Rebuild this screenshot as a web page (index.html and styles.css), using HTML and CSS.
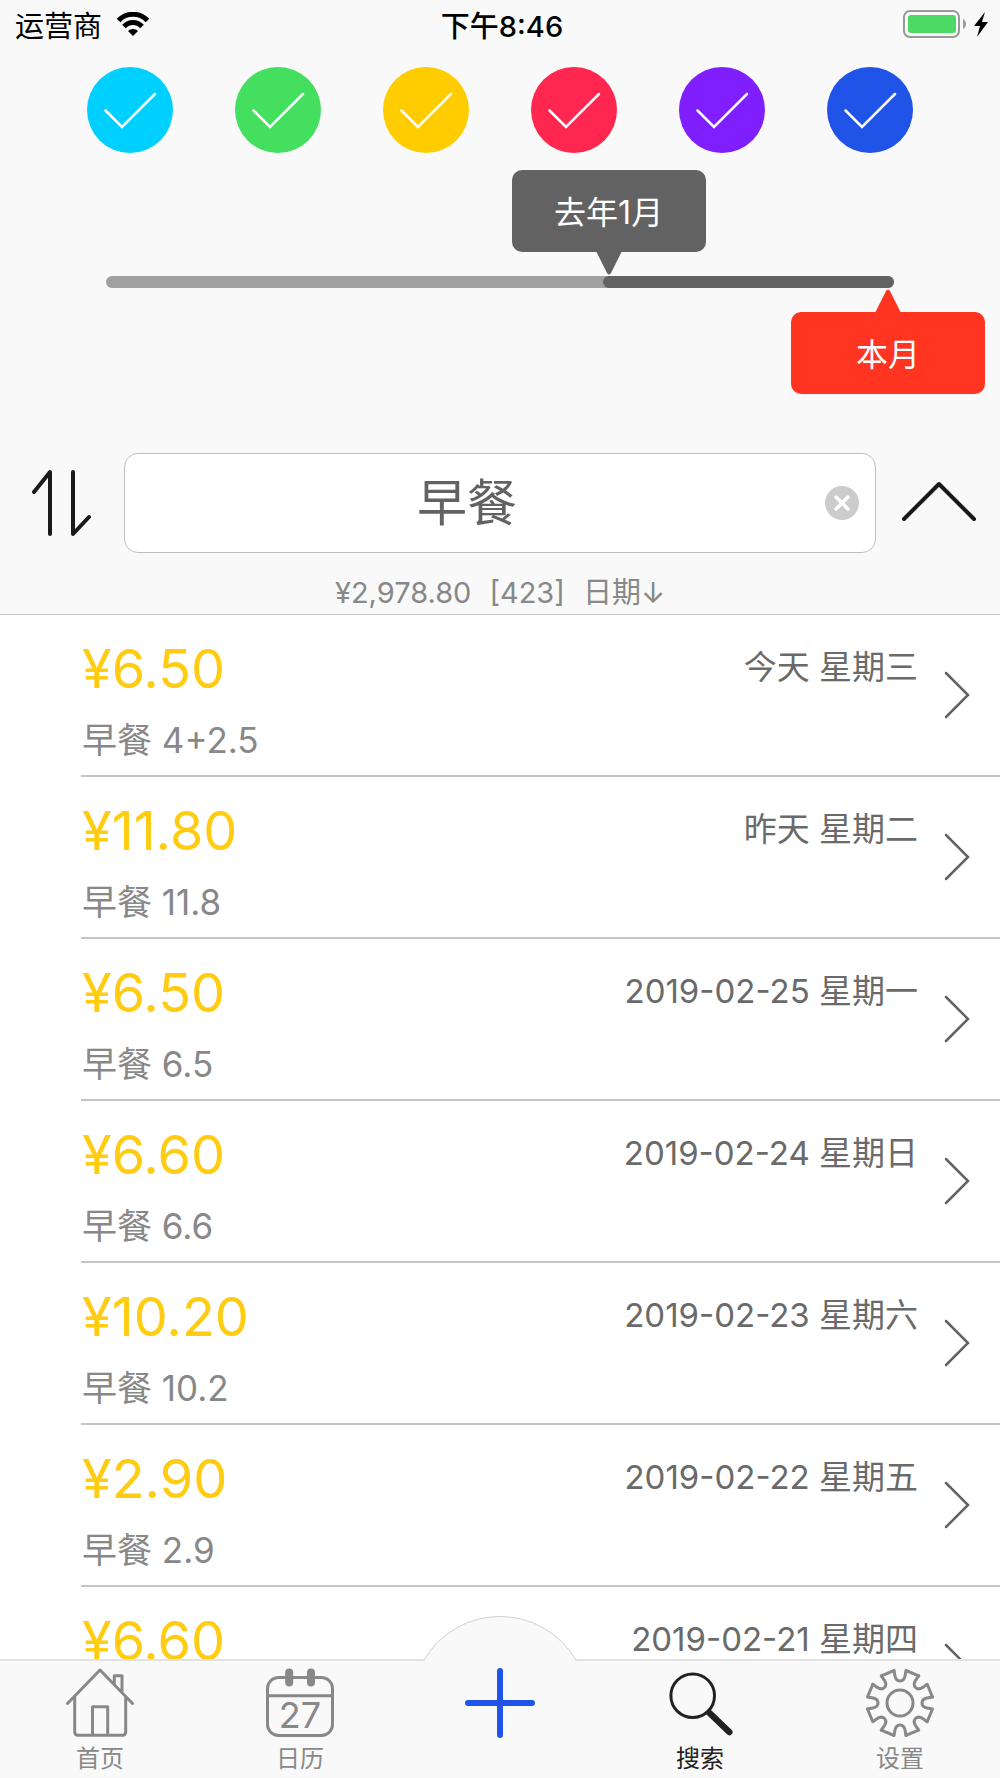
FILE: index.html
```html
<!DOCTYPE html>
<html lang="zh-CN">
<head>
<meta charset="utf-8">
<meta name="viewport" content="width=device-width, initial-scale=1">
<title>搜索</title>
<link rel="stylesheet" href="styles.css">
</head>
<body>
<svg class="defs" aria-hidden="true">
  <symbol id="check" viewBox="0 0 86 86"><path d="M18.500 43.500 35 60 68 27"/></symbol>
  <symbol id="next" viewBox="0 0 28 50"><path d="M3 3 25 25 3 47"/></symbol>
</svg>

<header class="header">
  <div class="status">
    <div class="status-left">
      <span>运营商</span>
      <svg class="wifi" viewBox="0 0 34 24" aria-hidden="true">
        <path d="M2.500 8.500C10.500.2 23.500.2 31.500 8.500M8 14.500c5-5.300 13-5.300 18 0" fill="none" stroke="#000" stroke-width="5"/>
        <path d="M17 24l-5-5c2.600-2.700 7.400-2.700 10 0z"/>
      </svg>
    </div>
    <time class="status-time">下午8:46</time>
    <div class="status-right">
      <svg class="battery" viewBox="0 0 86 28" aria-hidden="true">
        <rect x="1" y="1" width="55" height="26" rx="6" fill="none" stroke="#999" stroke-width="2"/>
        <rect x="5" y="5" width="48" height="18" rx="3" fill="#4cd964"/>
        <path d="M60 9c4 2 4 8 0 10z" fill="#999"/>
        <path d="M82 2 71 16h6l-3 11 11-15h-6z"/>
      </svg>
    </div>
  </div>

  <div class="colors">
    <label class="color"><input type="checkbox" class="dot cyan" aria-label="青色" checked><svg class="check"><use href="#check"/></svg></label>
    <label class="color"><input type="checkbox" class="dot green" aria-label="绿色" checked><svg class="check"><use href="#check"/></svg></label>
    <label class="color"><input type="checkbox" class="dot yellow" aria-label="黄色" checked><svg class="check"><use href="#check"/></svg></label>
    <label class="color"><input type="checkbox" class="dot red" aria-label="红色" checked><svg class="check"><use href="#check"/></svg></label>
    <label class="color"><input type="checkbox" class="dot purple" aria-label="紫色" checked><svg class="check"><use href="#check"/></svg></label>
    <label class="color"><input type="checkbox" class="dot blue" aria-label="蓝色" checked><svg class="check"><use href="#check"/></svg></label>
  </div>

  <div class="range">
    <input class="range-input" id="from" type="range" min="0" max="100" value="64" aria-label="开始月份">
    <input class="range-input" id="to" type="range" min="0" max="100" value="100" aria-label="结束月份">
    <div class="range-scale">
      <div class="range-fill" style="left: 64%; right: 0%"></div>
      <output class="tip tip-from" for="from" style="left: 64%">去年1月<svg class="tip-arrow" viewBox="0 0 26 24" aria-hidden="true"><path d="M0 0h26L15 22q-2 3-4 0z"/></svg></output>
      <output class="tip tip-to" for="to" style="left: 100%"><svg class="tip-arrow" viewBox="0 0 26 24" aria-hidden="true"><path d="M0 24h26L15 2q-2-3-4 0z"/></svg><span>本月</span></output>
    </div>
  </div>

  <form class="search" role="search">
    <button class="icon-button" type="button" aria-label="排序">
      <svg class="sort" viewBox="0 0 60 68" aria-hidden="true"><path d="M2 23 18 3V65M41 3V65L57 48"/></svg>
    </button>
    <div class="field">
      <input class="field-input" type="text" value="早餐" aria-label="搜索">
      <button class="clear" type="button" aria-label="清除">
        <svg class="clear-icon" viewBox="0 0 34 34" aria-hidden="true"><circle cx="17" cy="17" r="17" fill="#ccc"/><path d="M11 11 23 23M23 11 11 23" stroke="#fff" stroke-width="3.500" stroke-linecap="round"/></svg>
      </button>
    </div>
    <button class="icon-button" type="button" aria-label="收起">
      <svg class="collapse" viewBox="0 0 76 40" aria-hidden="true"><path d="M4 36 39 1 74 36"/></svg>
    </button>
  </form>
  <p class="summary"><span>¥2,978.80</span><span>[423]</span><span>日期↓</span></p>
</header>

<main class="content">
  <ul class="list">
    <li><a class="row" href="#"><span class="amount">¥6.50</span><span class="date">今天 星期三</span><span class="note">早餐 4+2.5</span><svg class="next"><use href="#next"/></svg></a></li>
    <li><a class="row" href="#"><span class="amount">¥11.80</span><span class="date">昨天 星期二</span><span class="note">早餐 11.8</span><svg class="next"><use href="#next"/></svg></a></li>
    <li><a class="row" href="#"><span class="amount">¥6.50</span><span class="date">2019-02-25 星期一</span><span class="note">早餐 6.5</span><svg class="next"><use href="#next"/></svg></a></li>
    <li><a class="row" href="#"><span class="amount">¥6.60</span><span class="date">2019-02-24 星期日</span><span class="note">早餐 6.6</span><svg class="next"><use href="#next"/></svg></a></li>
    <li><a class="row" href="#"><span class="amount">¥10.20</span><span class="date">2019-02-23 星期六</span><span class="note">早餐 10.2</span><svg class="next"><use href="#next"/></svg></a></li>
    <li><a class="row" href="#"><span class="amount">¥2.90</span><span class="date">2019-02-22 星期五</span><span class="note">早餐 2.9</span><svg class="next"><use href="#next"/></svg></a></li>
    <li><a class="row" href="#"><span class="amount">¥6.60</span><span class="date">2019-02-21 星期四</span><svg class="next"><use href="#next"/></svg></a></li>
  </ul>
</main>

<nav class="tabs">
  <a class="tab" href="#">
    <svg class="tab-icon" viewBox="0 0 72 72" aria-hidden="true"><path d="M3.500 36.500 36 3 68.500 36.500M10.700 30V65q0 3.300 3.300 3.300H58.400q3.300 0 3.300-3.300V30M28.500 68V39.700h15.200V68M50.300 17V8.700H58V24"/></svg>
    <span>首页</span>
  </a>
  <a class="tab" href="#">
    <svg class="tab-icon" viewBox="0 0 72 72" aria-hidden="true"><rect x="3.500" y="10.500" width="65" height="58" rx="11"/><path d="M3.500 28.700h65"/><path class="pins" d="M25.200 5.500v10M47 5.500v10"/><text class="day" x="36" y="61">27</text></svg>
    <span>日历</span>
  </a>
  <a class="tab tab-add" href="#" aria-label="添加">
    <svg class="bump" viewBox="0 0 160 46" aria-hidden="true"><path class="bump-fill" d="M3 46.500A88 88 0 0 1 157 46.500z"/><path class="bump-line" d="M3.500 45A88 88 0 0 1 156.500 45"/></svg>
    <svg class="tab-icon plus" viewBox="0 0 72 72" aria-hidden="true"><path d="M36 4V68M4 36H68"/></svg>
  </a>
  <a class="tab active" href="#" aria-current="page">
    <svg class="tab-icon" viewBox="0 0 72 72" aria-hidden="true"><circle cx="28.700" cy="28.700" r="21.800"/><path class="handle" d="M45.500 46 65.300 65"/></svg>
    <span>搜索</span>
  </a>
  <a class="tab" href="#">
    <svg class="tab-icon" viewBox="-36 -36 72 72" aria-hidden="true">
      <circle r="13"/>
      <path id="cog" d="M-6-32.500-5-27Q-4-22 0-22Q4-22 5-27L6-32.500 18.700-27.200"/>
      <use href="#cog" transform="rotate(45)"/><use href="#cog" transform="rotate(90)"/><use href="#cog" transform="rotate(135)"/><use href="#cog" transform="rotate(180)"/><use href="#cog" transform="rotate(225)"/><use href="#cog" transform="rotate(270)"/><use href="#cog" transform="rotate(315)"/>
    </svg>
    <span>设置</span>
  </a>
</nav>
</body>
</html>
```

FILE: styles.css
```css
* { box-sizing: border-box; }

body {
  margin: 0;
  height: 100vh;
  display: flex;
  flex-direction: column;
  overflow: hidden;
  background: #fff;
  color: #000;
  font-family: Inter, "Noto Sans CJK SC", sans-serif;
  font-size: 29px;
}

button, input { font: inherit; color: inherit; }
button { padding: 0; border: 0; background: none; }
a { color: inherit; text-decoration: none; }
svg { display: block; flex: none; }
.defs { position: absolute; width: 0; height: 0; }

/* Header */
.header {
  flex: none;
  background: #f9f9f9;
  border-bottom: 1px solid #c4c4c4;
}

.status {
  display: grid;
  grid-template-columns: 1fr auto 1fr;
  align-items: center;
  height: 48px;
  padding: 0 11px 0 15px;
}
.status-left { display: flex; align-items: center; gap: 14px; }
.status-time { font-weight: 500; }
.status-right { justify-self: end; }
.wifi { width: 34px; height: 24px; }
.battery { width: 86px; height: 28px; }

.colors {
  display: grid;
  grid-template-columns: repeat(6, 1fr);
  padding: 19px 56px 0;
}
.color { display: grid; justify-content: center; }
.color > * { grid-area: 1 / 1; }
.dot {
  appearance: none;
  width: 86px;
  height: 86px;
  margin: 0;
  border-radius: 50%;
}
.check {
  width: 86px;
  height: 86px;
  fill: none;
  stroke: #fff;
  stroke-width: 2.5;
  stroke-linecap: round;
  pointer-events: none;
}
.cyan { background: #00d0ff; }
.green { background: #44df5e; }
.yellow { background: #ffcc00; }
.red { background: #ff264f; }
.purple { background: #7f1fff; }
.blue { background: #2053e8; }

/* Month range */
.range {
  display: grid;
  height: 12px;
  margin: 123px 106px 165px;
  border-radius: 6px;
  background: #a0a0a0;
}
.range > * { grid-area: 1 / 1; }
.range-input {
  appearance: none;
  width: 100%;
  height: 12px;
  margin: 0;
  background: none;
  pointer-events: none;
}
.range-input::-webkit-slider-thumb {
  appearance: none;
  width: 12px;
  height: 12px;
  border-radius: 50%;
  background: #626262;
  pointer-events: auto;
}
.range-scale { position: relative; margin: 0 6px; pointer-events: none; }
.range-fill { position: absolute; top: 0; bottom: 0; background: #626262; }
.tip {
  position: absolute;
  width: 194px;
  height: 82px;
  margin-left: -97px;
  padding-top: 4px;
  border-radius: 10px;
  color: #fff;
  font-size: 32px;
  line-height: 78px;
  text-align: center;
}
.tip-from { bottom: 36px; background: #626262; }
.tip-to { top: 36px; background: #ff3522; }
.tip-arrow { position: absolute; left: 84px; width: 26px; height: 24px; }
.tip-from .tip-arrow { top: 81px; fill: #626262; }
.tip-to .tip-arrow { bottom: 81px; fill: #ff3522; }

/* Search */
.search {
  display: grid;
  grid-template-columns: 124px minmax(0, 1fr) 124px;
  align-items: center;
}
.icon-button { display: grid; place-items: center; height: 100px; }
.icon-button svg { fill: none; stroke: #1a1a1a; stroke-width: 4; stroke-linecap: round; stroke-linejoin: round; overflow: visible; }
.sort { width: 60px; height: 68px; }
.collapse { width: 76px; height: 40px; }
.field {
  display: flex;
  align-items: center;
  height: 100px;
  padding: 0 16px;
  border: 1px solid #c0c0c0;
  border-radius: 14px;
  background: #fff;
}
.field-input {
  flex: 1;
  min-width: 0;
  height: 90px;
  padding: 0 32px 8px 0;
  border: 0;
  outline: 0;
  background: none;
  color: #626262;
  font-size: 50px;
  text-align: center;
}
.clear-icon { width: 34px; height: 34px; }
.summary {
  display: flex;
  justify-content: center;
  gap: 18px;
  margin: 0;
  padding: 20px 0 1px;
  color: #888;
  line-height: 40px;
}

/* Records */
.content { flex: 1; min-height: 0; overflow: hidden auto; scrollbar-width: none; }
.list { margin: 0; padding: 0 0 0 81px; list-style: none; }
.row {
  display: grid;
  grid-template-columns: 1fr auto 28px;
  grid-template-rows: 74px 64px;
  column-gap: 25px;
  align-items: center;
  height: 162px;
  padding: 16px 29px 6px 1px;
  border-bottom: 2px solid #c4c4c4;
}
.amount { color: #fc1; font-size: 54px; }
.date { padding-bottom: 6px; color: #6a6a6a; font-size: 33px; }
.note { grid-area: 2 / 1; color: #888; font-size: 35px; }
.next {
  grid-area: 1 / 3 / 3 / 4;
  width: 28px;
  height: 50px;
  margin-bottom: 10px;
  fill: none;
  stroke: #626262;
  stroke-width: 2.5;
  stroke-linecap: round;
}

/* Tab bar */
.tabs {
  position: relative;
  flex: none;
  display: grid;
  grid-template-columns: repeat(5, 1fr);
  height: 119px;
  border-top: 2px solid #e2e2e2;
  background: #f9f9f9;
}
.tab {
  display: flex;
  flex-direction: column;
  align-items: center;
  gap: 2px;
  padding-top: 6px;
  color: #888;
  font-size: 24px;
  line-height: 36px;
}
.tab-icon {
  width: 72px;
  height: 72px;
  fill: none;
  stroke: #888;
  stroke-width: 3;
  stroke-linecap: round;
  stroke-linejoin: round;
}
.pins { stroke-width: 8; }
.day { fill: #888; stroke: none; font-size: 36px; text-anchor: middle; }
.tab-add { position: relative; }
.plus { stroke: #2053e8; stroke-width: 6; }
.bump { position: absolute; left: calc(50% - 80px); bottom: 116px; width: 160px; height: 46px; }
.bump-fill { fill: #f9f9f9; }
.bump-line { fill: none; stroke: #d0d0d0; stroke-width: 1; }
.active { color: #222; }
.active .tab-icon { stroke: #222; }
.active .handle { stroke-width: 6.5; }
```
